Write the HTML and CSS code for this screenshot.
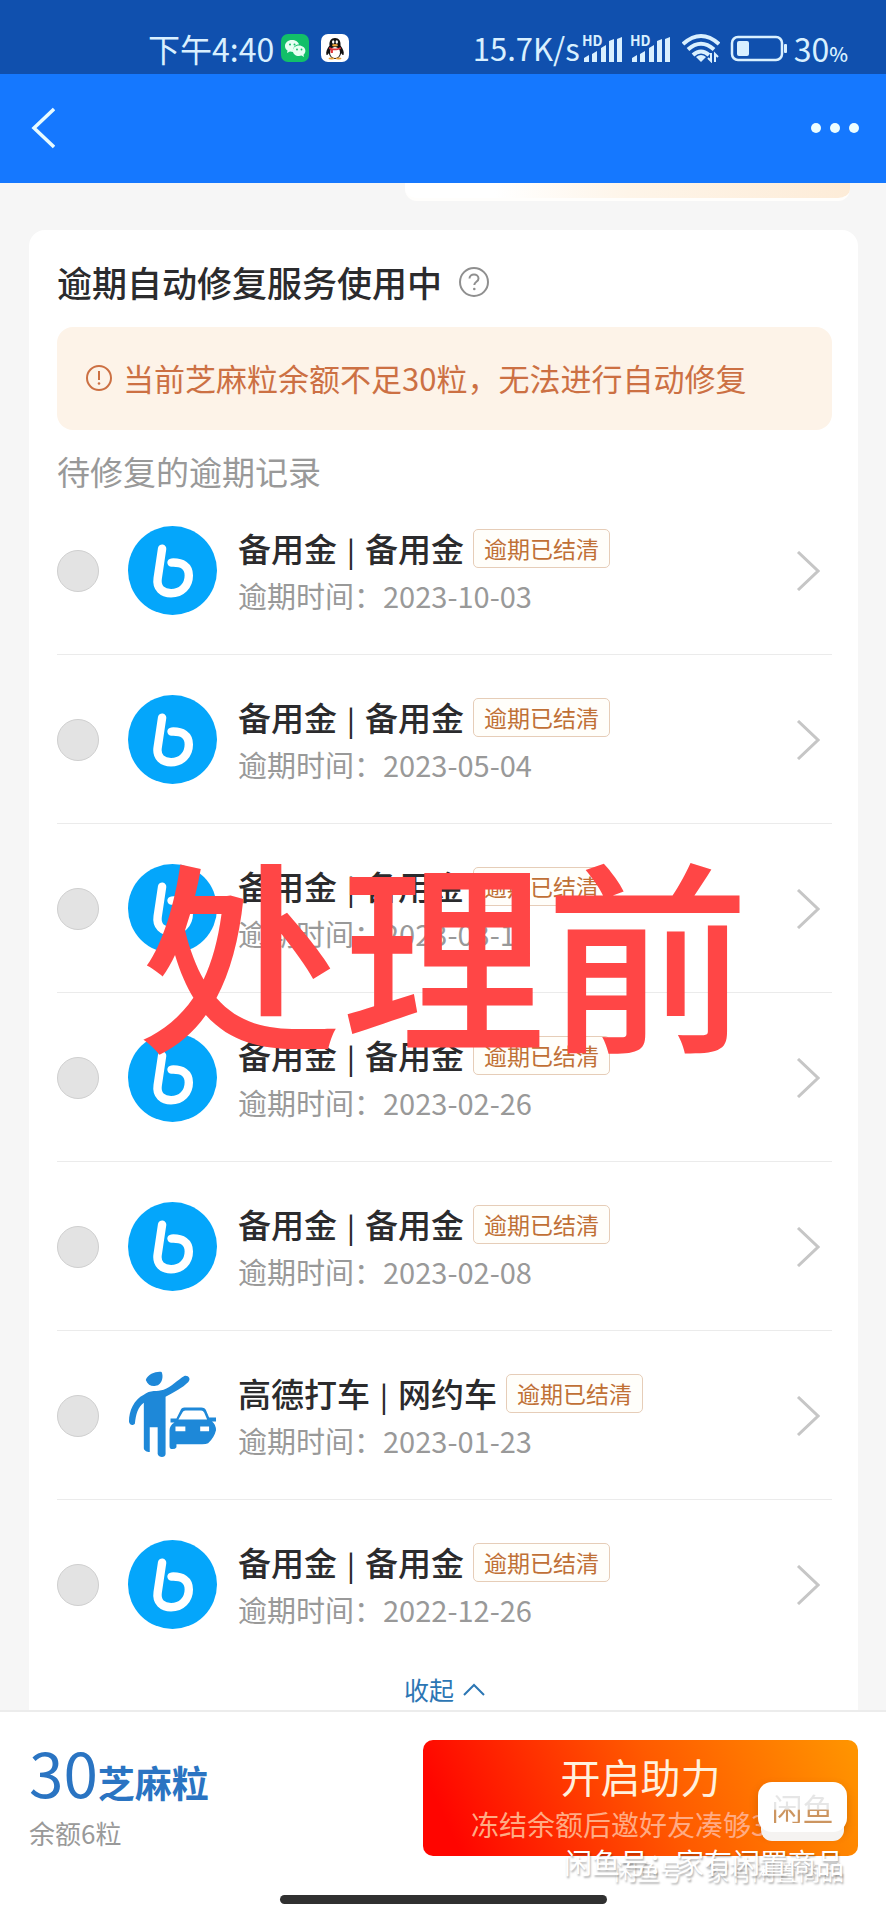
FILE: index.html
```html
<!DOCTYPE html>
<html lang="zh-CN">
<head>
<meta charset="utf-8">
<meta name="viewport" content="width=device-width, initial-scale=1">
<title>逾期自动修复服务</title>
<link rel="stylesheet" href="styles.css">
</head>
<body>
<svg class="defs" aria-hidden="true">
  <symbol id="byj" viewBox="0 0 90 90">
    <circle cx="45" cy="45" r="45" fill="#04a6fb"/>
    <path d="M34.500 23L30 53C28.500 63 35 68 43.500 68C54 68 61.500 60.500 61.500 50C61.500 40.500 55 36.500 44 37" fill="none" stroke="#fff" stroke-width="8.500" stroke-linecap="round"/>
  </symbol>
  <symbol id="taxi" viewBox="0 0 90 90">
    <g fill="#1e88d8">
      <path d="M18 9C20 3 29 0 34 1C36 5 35 14 28 15C24 16 20 14 18 9z"/>
      <path d="M16 24C22 19 30 21 36 19C44 16 50 9 57 5C61 4 64 8 61 11C55 17 47 21 38 26V84C38 88 31 88 30 84V57H22V82C19 82 16 80 16 78V32C10 36 8 44 7 53C5 56 1 54 1 51C1 40 6 29 16 24z"/>
      <path fill-rule="evenodd" d="M43 48h6l4-8q1-3 4-3h17q4 0 5 3l3 7h7v4h-4q4 3 4 9q-2 8-8 13q-2 1-6 1H49v3q-1 2-4 2t-3-3V60q0-5 5-8h-4zM51 49h29l-3-7q-1-2-3-2H58q-2 0-3 2zM48 56v5h10v-5zM73 56v5h9v-5z"/>
    </g>
  </symbol>
  <symbol id="next" viewBox="0 0 24 40">
    <path d="M2 1l20 19L2 39" fill="none" stroke="#c6c6c6" stroke-width="3"/>
  </symbol>
</svg>

<div class="screen">
  <div class="status">
    <div class="status-side">
      <span>下午4:40</span>
      <svg class="app" viewBox="0 0 28 28" aria-hidden="true">
        <rect width="28" height="28" rx="7" fill="#12bf69"/>
        <path d="M11 6c-4 0-7 2.700-7 6 0 2 1 3.500 2.500 4.500L6 19l3-1.500 3 .4c-.6-5 3-7.500 6-7.400C17.500 8 14.500 6 11 6z" fill="#e8fff4"/>
        <path d="M18 11.500c-3.500 0-6.200 2.300-6.200 5.200S14.500 22 18 22l2.500-.4L23 23l-.5-2.300c1.100-1 1.900-2.400 1.900-4 0-2.900-2.900-5.200-6.400-5.200z" fill="#e8fff4"/>
        <circle cx="9" cy="10.500" r="1" fill="#12bf69"/><circle cx="13.500" cy="10.500" r="1" fill="#12bf69"/>
        <circle cx="16" cy="15.500" r=".9" fill="#12bf69"/><circle cx="20.500" cy="15.500" r=".9" fill="#12bf69"/>
      </svg>
      <svg class="app" viewBox="0 0 28 28" aria-hidden="true">
        <rect width="28" height="28" rx="7" fill="#fff"/>
        <path d="M14 4c-4 0-6 3-5.500 7.500C6 15 4.500 18 5.500 21c1 0 1.800-1 2.200-1.800C9 23 11 25 14 25s5-2 6.300-5.800c.4.800 1.200 1.800 2.200 1.800 1-3-.5-6-3-9.500C20 7 18 4 14 4z" fill="#111"/>
        <ellipse cx="14" cy="18.500" rx="5" ry="5.500" fill="#fff"/>
        <ellipse cx="12.200" cy="8" rx="1.200" ry="1.700" fill="#fff"/><ellipse cx="15.800" cy="8" rx="1.200" ry="1.700" fill="#fff"/>
        <ellipse cx="14" cy="11.200" rx="3" ry="1.200" fill="#e8a23c"/>
        <path d="M8.500 13c4 2 7 2 11 0l.4 2c-3 1.300-5.500 1.500-8 1.200V19H9.600v-3.300L8 15z" fill="#e0343a"/>
        <ellipse cx="10.500" cy="24.500" rx="3" ry="1" fill="#e8a23c"/><ellipse cx="17.500" cy="24.500" rx="3" ry="1" fill="#e8a23c"/>
      </svg>
    </div>
    <div class="status-side status-right">
      <span class="speed">15.7K/s</span>
      <svg class="signal" viewBox="0 0 42 30">
        <text class="hd" x="0" y="12">HD</text>
        <path fill="currentColor" d="M2 24l5-3v7H2zM10 20l5-3v11h-5zM19 14l5-3v17h-5zM27 7l5-2v23h-5zM35 5l5-2v25h-5z"/>
      </svg>
      <svg class="signal" viewBox="0 0 42 30">
        <text class="hd" x="0" y="12">HD</text>
        <path fill="currentColor" d="M2 24l5-3v7H2zM10 20l5-3v11h-5zM19 14l5-3v17h-5zM27 7l5-2v23h-5zM35 5l5-2v25h-5z"/>
      </svg>
      <svg class="wifi" viewBox="0 0 38 30" aria-hidden="true">
        <g fill="none" stroke="currentColor" stroke-width="4">
          <path d="M1 11Q19-5 37 11"/><path d="M6 16.500Q19 5 32 16.500"/><path d="M11 22Q19 15 27 22"/>
        </g>
        <path d="M14 24q5-4 10 0l-5 5z" fill="currentColor"/>
        <path d="M29 20v8l-3-3M33 29v-8l3 3" fill="none" stroke="currentColor" stroke-width="2"/>
      </svg>
      <svg class="battery" viewBox="0 0 58 28" aria-hidden="true">
        <rect x="2" y="3" width="50" height="23" rx="6" fill="none" stroke="currentColor" stroke-width="2.500"/>
        <rect x="7" y="7" width="12" height="15" rx="2" fill="currentColor"/>
        <rect x="54" y="10" width="3" height="9" rx="1" fill="currentColor"/>
      </svg>
      <span>30<small>%</small></span>
    </div>
  </div>

  <header class="nav">
    <button class="icon-btn" type="button" aria-label="返回">
      <svg class="back" viewBox="0 0 26 42"><path d="M25 2L5 21l20 19" fill="none" stroke="#e8fbff" stroke-width="3.500"/></svg>
    </button>
    <button class="icon-btn" type="button" aria-label="更多">
      <svg class="more" viewBox="0 0 48 12"><g fill="#ecfdff"><circle cx="5" cy="6" r="5"/><circle cx="24" cy="6" r="5"/><circle cx="43" cy="6" r="5"/></g></svg>
    </button>
  </header>

  <main class="content">
    <div class="peek"></div>

    <section class="card">
      <div class="card-head">
        <h1>逾期自动修复服务使用中</h1>
        <button class="icon-btn" type="button" aria-label="帮助">
          <svg class="help" viewBox="0 0 32 32"><g fill="none" stroke="#8f8f8f" stroke-width="2"><circle cx="16" cy="16" r="14"/><path d="M11.500 12.500C11.500 7 20.500 7 20.500 12.500C20.500 16 16.300 15.500 16.300 19"/></g><circle cx="16.300" cy="23" r="1.300" fill="#8f8f8f"/></svg>
        </button>
      </div>

      <div class="notice">
        <svg class="warn" viewBox="0 0 28 28" aria-hidden="true"><g fill="none" stroke="#cc7043" stroke-width="2"><circle cx="14" cy="14" r="12"/><path d="M14 7v9"/></g><circle cx="14" cy="19.500" r="1.300" fill="#cc7043"/></svg>
        <p>当前芝麻粒余额不足30粒，无法进行自动修复</p>
      </div>

      <h2>待修复的逾期记录</h2>

      <ul class="list">
        <li class="row">
          <input class="pick" type="checkbox" aria-label="选择 2023-10-03 备用金" disabled>
          <svg class="logo" aria-hidden="true"><use href="#byj"/></svg>
          <div class="info">
            <div class="name"><span>备用金<i>|</i>备用金</span><em class="tag">逾期已结清</em></div>
            <p class="date">逾期时间：2023-10-03</p>
          </div>
          <svg class="next" aria-hidden="true"><use href="#next"/></svg>
        </li>
        <li class="row">
          <input class="pick" type="checkbox" aria-label="选择 2023-05-04 备用金" disabled>
          <svg class="logo" aria-hidden="true"><use href="#byj"/></svg>
          <div class="info">
            <div class="name"><span>备用金<i>|</i>备用金</span><em class="tag">逾期已结清</em></div>
            <p class="date">逾期时间：2023-05-04</p>
          </div>
          <svg class="next" aria-hidden="true"><use href="#next"/></svg>
        </li>
        <li class="row">
          <input class="pick" type="checkbox" aria-label="选择 2023-03-1 备用金" disabled>
          <svg class="logo" aria-hidden="true"><use href="#byj"/></svg>
          <div class="info">
            <div class="name"><span>备用金<i>|</i>备用金</span><em class="tag">逾期已结清</em></div>
            <p class="date">逾期时间：2023-03-1</p>
          </div>
          <svg class="next" aria-hidden="true"><use href="#next"/></svg>
        </li>
        <li class="row">
          <input class="pick" type="checkbox" aria-label="选择 2023-02-26 备用金" disabled>
          <svg class="logo" aria-hidden="true"><use href="#byj"/></svg>
          <div class="info">
            <div class="name"><span>备用金<i>|</i>备用金</span><em class="tag">逾期已结清</em></div>
            <p class="date">逾期时间：2023-02-26</p>
          </div>
          <svg class="next" aria-hidden="true"><use href="#next"/></svg>
        </li>
        <li class="row">
          <input class="pick" type="checkbox" aria-label="选择 2023-02-08 备用金" disabled>
          <svg class="logo" aria-hidden="true"><use href="#byj"/></svg>
          <div class="info">
            <div class="name"><span>备用金<i>|</i>备用金</span><em class="tag">逾期已结清</em></div>
            <p class="date">逾期时间：2023-02-08</p>
          </div>
          <svg class="next" aria-hidden="true"><use href="#next"/></svg>
        </li>
        <li class="row">
          <input class="pick" type="checkbox" aria-label="选择 2023-01-23 高德打车" disabled>
          <svg class="logo" aria-hidden="true"><use href="#taxi"/></svg>
          <div class="info">
            <div class="name"><span>高德打车<i>|</i>网约车</span><em class="tag">逾期已结清</em></div>
            <p class="date">逾期时间：2023-01-23</p>
          </div>
          <svg class="next" aria-hidden="true"><use href="#next"/></svg>
        </li>
        <li class="row">
          <input class="pick" type="checkbox" aria-label="选择 2022-12-26 备用金" disabled>
          <svg class="logo" aria-hidden="true"><use href="#byj"/></svg>
          <div class="info">
            <div class="name"><span>备用金<i>|</i>备用金</span><em class="tag">逾期已结清</em></div>
            <p class="date">逾期时间：2022-12-26</p>
          </div>
          <svg class="next" aria-hidden="true"><use href="#next"/></svg>
        </li>
      </ul>

      <button class="collapse" type="button">收起
        <svg class="up" viewBox="0 0 22 14" aria-hidden="true"><path d="M1 12L11 2l10 10" fill="none" stroke="#2c76b4" stroke-width="2"/></svg>
      </button>

      <div class="stamp">处理前</div>
    </section>
  </main>

  <footer class="bar">
    <div class="bar-row">
      <div class="cost">
        <p class="need"><span>30</span>芝麻粒</p>
        <p class="balance">余额6粒</p>
      </div>
      <button class="cta" type="button">
        <span class="cta-title">开启助力</span>
        <span class="cta-sub">冻结余额后邀好友凑够30粒</span>
      </button>
    </div>
    <div class="home"></div>
    <div class="badge"><span>闲鱼</span></div>
    <p class="mark mark-back">闲鱼号：家有闲置商品</p>
    <p class="mark">闲鱼号：家有闲置商品</p>
  </footer>
</div>
</body>
</html>
```
FILE: styles.css
```css
* { box-sizing: border-box; }

body {
  margin: 0;
  background: #f6f6f6;
  font-family: "Noto Sans CJK SC", "Noto Sans", sans-serif;
  color: #2b2b2d;
}

h1, h2, p, ul { margin: 0; padding: 0; }
h1, h2 { font-weight: 400; }
svg { display: block; flex: none; }

button {
  border: 0;
  padding: 0;
  background: none;
  font-family: inherit;
  color: inherit;
}

.defs { position: absolute; width: 0; height: 0; }

.screen {
  display: flex;
  flex-direction: column;
  min-height: 100vh;
}

/* status bar */
.status {
  display: flex;
  justify-content: space-between;
  padding: 24px 38px 0 148px;
  height: 74px;
  background: #1050ae;
  color: #d9f0ff;
  font-size: 32px;
  line-height: 48px;
}
.status-side { display: flex; gap: 12px; }
.status-right { gap: 6px; }
.speed { margin-right: -4px; font-size: 31px; }
.status small { font-size: 20px; font-weight: 500; }
.app { width: 28px; height: 28px; margin-top: 10px; }
.app:first-of-type { margin-left: -5px; }
.signal { width: 42px; height: 30px; margin-top: 10px; }
.hd { font: 700 14px "Noto Sans CJK SC", sans-serif; fill: currentColor; }
.wifi { width: 38px; height: 30px; margin: 9px 0 0 4px; }
.battery { width: 58px; height: 28px; margin: 10px 0 0 4px; }

/* navigation */
.nav {
  display: flex;
  align-items: center;
  justify-content: space-between;
  height: 109px;
  padding: 0 27px 2px 29px;
  background: #1578ff;
}
.icon-btn { display: block; }
.back { width: 26px; height: 42px; }
.more { width: 48px; height: 12px; }

/* content */
.content {
  flex: 1;
  padding: 0 28px 0 29px;
}
.peek {
  height: 18px;
  margin: 0 8px 29px 376px;
  border-bottom: 3px solid #fffefc;
  border-radius: 0 0 12px 12px;
  background: linear-gradient(90deg, #fff 20%, #fef5e9 50%, #fdecd8);
}
.card {
  position: relative;
  padding: 29px 26px 0 28px;
  border-radius: 16px 16px 0 0;
  background: #fff;
}
.card-head {
  display: flex;
  align-items: center;
  gap: 16px;
  height: 46px;
}
h1 {
  font-size: 35px;
  font-weight: 500;
  line-height: 44px;
}
.help { width: 32px; height: 32px; }
.notice {
  display: flex;
  align-items: center;
  gap: 10px;
  margin-top: 22px;
  padding: 29px 28px 31px;
  border-radius: 16px;
  background: #fdf3e8;
  color: #cc7043;
  font-size: 31px;
  line-height: 43px;
}
.warn { width: 28px; height: 28px; }
h2 {
  padding: 27px 0 1px;
  font-size: 33px;
  line-height: 28px;
  color: #999;
}

.list { list-style: none; }
.row {
  display: flex;
  align-items: center;
  padding: 40px 12px 39px 0;
  border-bottom: 1px solid #ebebeb;
}
.row:last-child { border-bottom-color: transparent; }
.pick {
  appearance: none;
  flex: none;
  width: 42px;
  height: 42px;
  margin: 0 29px 0 0;
  border: 1px solid #cfcfcf;
  border-radius: 50%;
  background: #e3e3e3;
}
.logo { width: 89px; height: 89px; margin-right: 21px; }
.info { flex: 1; }
.name {
  display: flex;
  align-items: center;
  gap: 9px;
  font-size: 33px;
  font-weight: 500;
  line-height: 40px;
}
.name i { margin: 0 10px; font-style: normal; font-size: 28px; }
.tag {
  padding: 0 10px;
  border: 1px solid #e6cdb8;
  border-radius: 5px;
  background: #fffefa;
  color: #c07036;
  font-size: 23px;
  font-style: normal;
  font-weight: 400;
  line-height: 37px;
}
.date {
  margin-top: 6px;
  font-size: 29px;
  line-height: 38px;
  color: #999;
}
.next { width: 24px; height: 40px; }

.collapse {
  display: flex;
  align-items: center;
  gap: 9px;
  margin: 0 auto;
  font-size: 25px;
  line-height: 41px;
  color: #2c76b4;
}
.up { width: 22px; height: 14px; }

.stamp {
  position: absolute;
  top: 616px;
  left: 0;
  right: 0;
  text-align: center;
  font-size: 204px;
  font-weight: 500;
  line-height: 204px;
  color: #ff4646;
}

/* bottom bar */
.bar {
  position: relative;
  padding: 28px 28px 16px 29px;
  border-top: 2px solid #ececec;
  background: #fff;
}
.bar-row {
  display: flex;
  justify-content: space-between;
}
.need {
  display: flex;
  align-items: baseline;
  font-size: 37px;
  font-weight: 700;
  line-height: 62px;
  color: #2a74c2;
}
.need span { font-size: 62px; font-weight: 400; }
.balance {
  margin-top: 2px;
  font-size: 26px;
  line-height: 36px;
  color: #999;
}
.cta {
  display: flex;
  flex-direction: column;
  align-items: center;
  justify-content: center;
  width: 435px;
  height: 116px;
  padding-top: 4px;
  border-radius: 10px;
  background: linear-gradient(65deg, #ff0500 8%, #ff5a00 55%, #ff9600);
}
.cta-title {
  font-size: 40px;
  line-height: 48px;
  color: #fff1dd;
}
.cta-sub {
  font-size: 28px;
  line-height: 48px;
  color: #ffab84;
}
.home {
  width: 327px;
  height: 9px;
  margin: 39px auto 0;
  border-radius: 5px;
  background: #303030;
}
.badge {
  position: absolute;
  top: 70px;
  right: 39px;
  display: flex;
  align-items: center;
  justify-content: center;
  width: 89px;
  height: 50px;
  border-radius: 14px;
  background: #fff;
  box-shadow: 0 12px 0 -3px #f5f3f1, 0 4px 8px rgba(120, 60, 0, 0.3);
}
.badge span {
  font-size: 31px;
  line-height: 31px;
  background: linear-gradient(#e6e6e6 55%, #cc9560 60%);
  background-clip: text;
  color: transparent;
}
.mark {
  position: absolute;
  top: 132px;
  right: 42px;
  font-size: 28px;
  line-height: 36px;
  color: #fff;
  text-shadow: 1px 2px 2px rgba(0, 0, 0, 0.3);
}
.mark-back {
  top: 140px;
  font-size: 23px;
}
```
